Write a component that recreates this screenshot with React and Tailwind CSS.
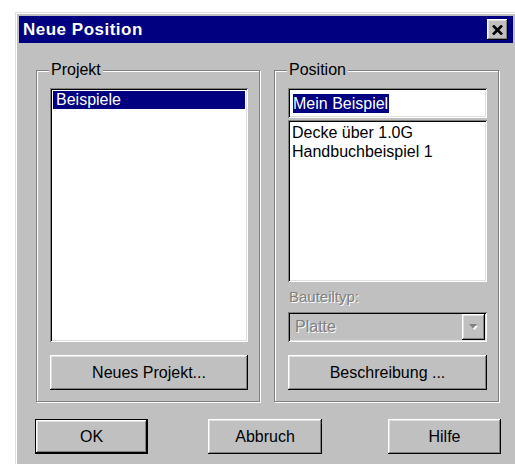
import React from 'react';

const raised =
  'shadow-[inset_-1px_-1px_0_#000,inset_1px_1px_0_#fff,inset_-2px_-2px_0_#808080,inset_2px_2px_0_#dfdfdf]';
const sunken =
  'shadow-[inset_1px_1px_0_#808080,inset_-1px_-1px_0_#fff,inset_2px_2px_0_#000,inset_-2px_-2px_0_#dfdfdf]';
const etched = 'border border-[#808080] shadow-[1px_1px_0_#fff,inset_1px_1px_0_#fff]';
const disabledText = 'text-[#808080] [text-shadow:1px_1px_0_#fff]';

function Button({ children, isDefault, className = '' }) {
  return (
    <button
      className={`h-[35px] bg-[#c0c0c0] text-[16px] text-black leading-none ${
        isDefault ? 'border border-black' : ''
      } ${className}`}
    >
      <span className={`flex h-full w-full items-center justify-center ${raised}`}>{children}</span>
    </button>
  );
}

function GroupBox({ label, width, children }) {
  return (
    <div className={`relative ${width} ${etched} pt-[17px] pl-[13px] pr-[11px] pb-[11px]`}>
      <span className="absolute -top-[10px] left-[12px] bg-[#c0c0c0] px-[2px] leading-[18px]">{label}</span>
      {children}
    </div>
  );
}

export default function App() {
  return (
    <div className="h-[464px] overflow-hidden bg-white font-['Liberation_Sans',Arial,sans-serif] text-[16px] text-black">
      <div
        className={`ml-[15px] mt-[12px] w-[502px] bg-[#c0c0c0] p-[4px] pb-[16px] shadow-[inset_1px_1px_0_#dfdfdf,inset_2px_2px_0_#fff,inset_-1px_-1px_0_#000,inset_-2px_-2px_0_#808080]`}
      >
        {/* title bar */}
        <div className="flex h-[27px] items-center justify-between bg-[#000080] pl-[4px] pr-[5px]">
          <span className="text-[17px] font-bold tracking-[0.5px] text-white">Neue Position</span>
          <button className={`flex h-[21px] w-[21px] items-center justify-center bg-[#c0c0c0] pt-px ${raised}`}>
            <svg width="11" height="10" viewBox="0 0 11 10">
              <path d="M1 0.5 L10 9.5 M10 0.5 L1 9.5" stroke="#000" strokeWidth="2.6" />
            </svg>
          </button>
        </div>

        <div className="pl-[17px] pt-[27px]">
          <div className="flex gap-[14px]">
            <GroupBox label="Projekt" width="w-[224px]">
              <div className={`h-[254px] w-[198px] bg-white p-[3px] ${sunken}`}>
                <div className="h-[18px] bg-[#000080] pl-[3px] leading-[18px] text-white">Beispiele</div>
              </div>
              <Button className="mt-[13px] h-[34px] w-[198px]">Neues Projekt...</Button>
            </GroupBox>

            <GroupBox label="Position" width="w-[225px]">
              <div className={`flex h-[30px] w-[199px] items-center bg-white pl-[5px] ${sunken}`}>
                <span className="bg-[#000080] pr-px leading-[19px] text-white">Mein Beispiel</span>
              </div>
              <div className={`mt-[2px] h-[162px] w-[199px] bg-white px-[4px] py-[3px] leading-[19px] ${sunken}`}>
                <div>Decke über 1.0G</div>
                <div>Handbuchbeispiel 1</div>
              </div>
              <div className={`mt-[6px] mb-[6px] pl-px text-[15px] leading-[18px] ${disabledText}`}>Bauteiltyp:</div>
              <div className={`flex h-[30px] w-[199px] items-stretch bg-[#c0c0c0] p-[2px] ${sunken}`}>
                <span className={`flex flex-1 items-center pl-[5px] ${disabledText}`}>Platte</span>
                <span className={`flex w-[23px] items-center justify-center ${raised}`}>
                  <svg width="9" height="6" viewBox="0 0 9 6">
                    <path d="M1 1 H8 L4.5 5 Z" fill="#fff" transform="translate(1 1)" />
                    <path d="M0 0 H8 L4 4.5 Z" fill="#808080" />
                  </svg>
                </span>
              </div>
              <Button className="mt-[13px] h-[34px] w-[199px]">Beschreibung ...</Button>
            </GroupBox>
          </div>

          <div className="mt-[17px] -ml-px flex">
            <Button isDefault className="w-[113px]">OK</Button>
            <Button className="ml-[60px] w-[114px]">Abbruch</Button>
            <Button className="ml-[66px] w-[113px]">Hilfe</Button>
          </div>
        </div>
      </div>
    </div>
  );
}
